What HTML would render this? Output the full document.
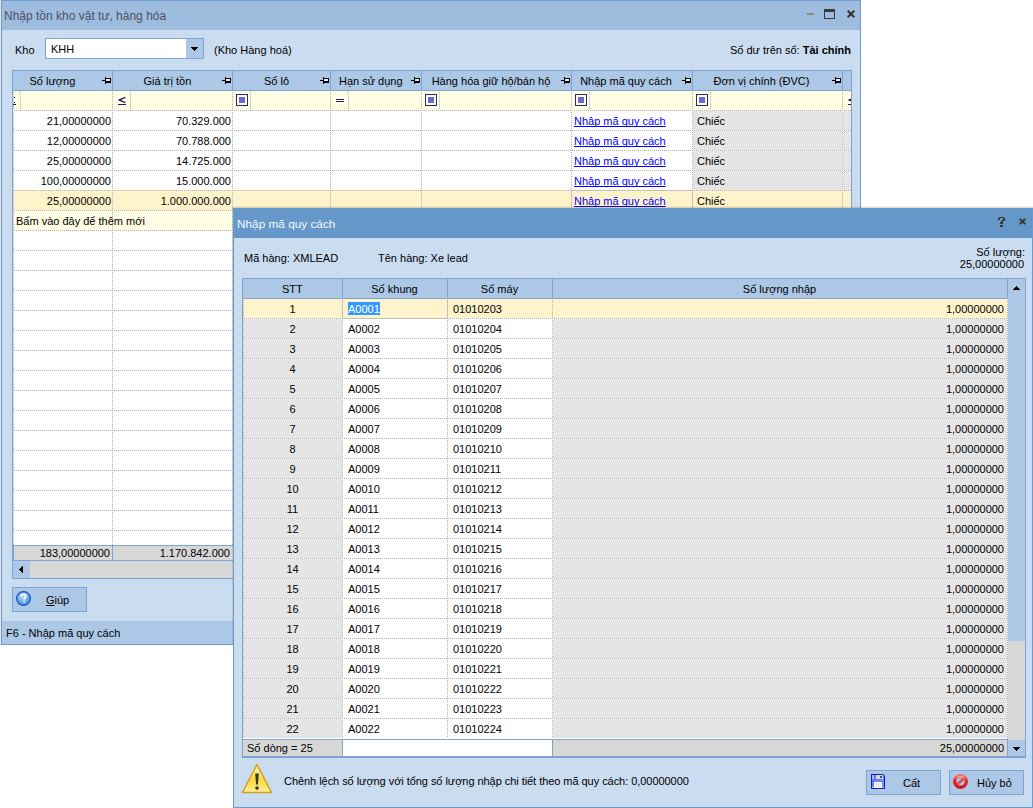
<!DOCTYPE html>
<html><head><meta charset="utf-8"><style>
html,body{margin:0;padding:0;background:#fff;width:1033px;height:808px;overflow:hidden;position:relative}
body div{position:absolute}
.t{font-family:"Liberation Sans",sans-serif;white-space:nowrap}
svg{position:absolute}
</style></head><body>
<div style="left:0px;top:0px;width:1px;height:645px;background:#e9e4df;"></div>
<div style="left:1px;top:0px;width:860px;height:645px;background:#6f9cd2;"></div>
<div style="left:2px;top:1px;width:858px;height:29px;background:#9ebcdd;"></div>
<div style="left:2px;top:30px;width:858px;height:591px;background:#cadcf0;"></div>
<div style="left:2px;top:621px;width:858px;height:23px;background:#adc7e6;"></div>
<div class="t" style="top:9px;font-size:12px;line-height:14px;color:#4f4f66;left:4px;">Nhập tồn kho vật tư, hàng hóa</div>
<div style="left:807px;top:13px;width:7px;height:2px;background:#8c8884;"></div>
<div style="left:824px;top:9px;width:11px;height:10px;background:transparent;box-sizing:border-box;border:1px solid #3c3c3c;border-top-width:3px"></div>
<svg style="position:absolute;left:846px;top:9px" width="10" height="10"><path d="M1.7 1.7L8.3 8.3M8.3 1.7L1.7 8.3" stroke="#333" stroke-width="2"/></svg>
<div class="t" style="top:43px;font-size:11px;line-height:14px;color:#000;left:15px;">Kho</div>
<div style="left:45px;top:38px;width:159px;height:21px;background:#7fa4d2;"></div>
<div style="left:46px;top:39px;width:140px;height:19px;background:#fff;"></div>
<div style="left:186px;top:39px;width:17px;height:19px;background:#adc7e6;"></div>
<div style="left:191px;top:47px;width:7px;height:1px;background:#000;"></div>
<div style="left:192px;top:48px;width:5px;height:1px;background:#000;"></div>
<div style="left:193px;top:49px;width:3px;height:1px;background:#000;"></div>
<div style="left:194px;top:50px;width:1px;height:1px;background:#000;"></div>
<div class="t" style="top:42px;font-size:11px;line-height:14px;color:#000;left:51px;">KHH</div>
<div class="t" style="top:43px;font-size:11px;line-height:14px;color:#000;left:214px;">(Kho Hàng hoá)</div>
<div class="t" style="top:43px;font-size:11px;line-height:14px;color:#000;left:251px;width:600px;text-align:right;">Số dư trên sổ: <b>Tài chính</b></div>
<div style="left:12px;top:70px;width:840px;height:509px;background:#7ea3d2;"></div>
<div style="left:13px;top:71px;width:838px;height:19px;background:#adc7e6;"></div>
<div style="left:13px;top:91px;width:838px;height:454px;background:#fff;"></div>
<div style="left:13px;top:91px;width:838px;height:19px;background:#fffde3;"></div>
<div style="left:112px;top:71px;width:1px;height:19px;background:#7ea3d2;"></div>
<div style="left:232px;top:71px;width:1px;height:19px;background:#7ea3d2;"></div>
<div style="left:330px;top:71px;width:1px;height:19px;background:#7ea3d2;"></div>
<div style="left:421px;top:71px;width:1px;height:19px;background:#7ea3d2;"></div>
<div style="left:571px;top:71px;width:1px;height:19px;background:#7ea3d2;"></div>
<div style="left:692px;top:71px;width:1px;height:19px;background:#7ea3d2;"></div>
<div style="left:842px;top:71px;width:1px;height:19px;background:#7ea3d2;"></div>
<div style="left:102px;top:80px;width:3px;height:1px;background:#000;"></div>
<div style="left:105px;top:77px;width:1px;height:7px;background:#000;"></div>
<div style="left:106px;top:78px;width:5px;height:1px;background:#000;"></div>
<div style="left:110px;top:78px;width:1px;height:5px;background:#000;"></div>
<div style="left:106px;top:81px;width:5px;height:2px;background:#000;"></div>
<div style="left:106px;top:79px;width:4px;height:2px;background:#e6edf6;"></div>
<div style="left:222px;top:80px;width:3px;height:1px;background:#000;"></div>
<div style="left:225px;top:77px;width:1px;height:7px;background:#000;"></div>
<div style="left:226px;top:78px;width:5px;height:1px;background:#000;"></div>
<div style="left:230px;top:78px;width:1px;height:5px;background:#000;"></div>
<div style="left:226px;top:81px;width:5px;height:2px;background:#000;"></div>
<div style="left:226px;top:79px;width:4px;height:2px;background:#e6edf6;"></div>
<div style="left:320px;top:80px;width:3px;height:1px;background:#000;"></div>
<div style="left:323px;top:77px;width:1px;height:7px;background:#000;"></div>
<div style="left:324px;top:78px;width:5px;height:1px;background:#000;"></div>
<div style="left:328px;top:78px;width:1px;height:5px;background:#000;"></div>
<div style="left:324px;top:81px;width:5px;height:2px;background:#000;"></div>
<div style="left:324px;top:79px;width:4px;height:2px;background:#e6edf6;"></div>
<div style="left:411px;top:80px;width:3px;height:1px;background:#000;"></div>
<div style="left:414px;top:77px;width:1px;height:7px;background:#000;"></div>
<div style="left:415px;top:78px;width:5px;height:1px;background:#000;"></div>
<div style="left:419px;top:78px;width:1px;height:5px;background:#000;"></div>
<div style="left:415px;top:81px;width:5px;height:2px;background:#000;"></div>
<div style="left:415px;top:79px;width:4px;height:2px;background:#e6edf6;"></div>
<div style="left:561px;top:80px;width:3px;height:1px;background:#000;"></div>
<div style="left:564px;top:77px;width:1px;height:7px;background:#000;"></div>
<div style="left:565px;top:78px;width:5px;height:1px;background:#000;"></div>
<div style="left:569px;top:78px;width:1px;height:5px;background:#000;"></div>
<div style="left:565px;top:81px;width:5px;height:2px;background:#000;"></div>
<div style="left:565px;top:79px;width:4px;height:2px;background:#e6edf6;"></div>
<div style="left:682px;top:80px;width:3px;height:1px;background:#000;"></div>
<div style="left:685px;top:77px;width:1px;height:7px;background:#000;"></div>
<div style="left:686px;top:78px;width:5px;height:1px;background:#000;"></div>
<div style="left:690px;top:78px;width:1px;height:5px;background:#000;"></div>
<div style="left:686px;top:81px;width:5px;height:2px;background:#000;"></div>
<div style="left:686px;top:79px;width:4px;height:2px;background:#e6edf6;"></div>
<div style="left:832px;top:80px;width:3px;height:1px;background:#000;"></div>
<div style="left:835px;top:77px;width:1px;height:7px;background:#000;"></div>
<div style="left:836px;top:78px;width:5px;height:1px;background:#000;"></div>
<div style="left:840px;top:78px;width:1px;height:5px;background:#000;"></div>
<div style="left:836px;top:81px;width:5px;height:2px;background:#000;"></div>
<div style="left:836px;top:79px;width:4px;height:2px;background:#e6edf6;"></div>
<div class="t" style="top:74px;font-size:11px;line-height:14px;color:#000;left:-247.6px;width:600px;text-align:center;">Số lượng</div>
<div class="t" style="top:74px;font-size:11px;line-height:14px;color:#000;left:-132.6px;width:600px;text-align:center;">Giá trị tồn</div>
<div class="t" style="top:74px;font-size:11px;line-height:14px;color:#000;left:-23.5px;width:600px;text-align:center;">Số lô</div>
<div class="t" style="top:74px;font-size:11px;line-height:14px;color:#000;left:70.80000000000001px;width:600px;text-align:center;">Hạn sử dụng</div>
<div class="t" style="top:74px;font-size:11px;line-height:14px;color:#000;left:191px;width:600px;text-align:center;">Hàng hóa giữ hộ/bán hộ</div>
<div class="t" style="top:74px;font-size:11px;line-height:14px;color:#000;left:326px;width:600px;text-align:center;">Nhập mã quy cách</div>
<div class="t" style="top:74px;font-size:11px;line-height:14px;color:#000;left:461.5px;width:600px;text-align:center;">Đơn vị chính (ĐVC)</div>
<div style="left:236px;top:94px;width:12px;height:12px;background:#fff;box-sizing:border-box;border:1px solid #2a2a6a"></div>
<div style="left:239px;top:97px;width:6px;height:6px;background:#6a6ad2;"></div>
<div style="left:425px;top:94px;width:12px;height:12px;background:#fff;box-sizing:border-box;border:1px solid #2a2a6a"></div>
<div style="left:428px;top:97px;width:6px;height:6px;background:#6a6ad2;"></div>
<div style="left:575px;top:94px;width:12px;height:12px;background:#fff;box-sizing:border-box;border:1px solid #2a2a6a"></div>
<div style="left:578px;top:97px;width:6px;height:6px;background:#6a6ad2;"></div>
<div style="left:696px;top:94px;width:12px;height:12px;background:#fff;box-sizing:border-box;border:1px solid #2a2a6a"></div>
<div style="left:699px;top:97px;width:6px;height:6px;background:#6a6ad2;"></div>
<svg style="position:absolute;left:118px;top:96px" width="9" height="10"><path d="M7.4 1.4L1.3 4L7.4 6.6" fill="none" stroke="#1c1c5c" stroke-width="1.3"/><rect x="0" y="8" width="8" height="1" fill="#1c1c5c"/></svg>
<div style="left:336px;top:99px;width:8px;height:1px;background:#1c1c5c;"></div>
<div style="left:336px;top:101px;width:8px;height:1px;background:#1c1c5c;"></div>
<div style="left:13px;top:91px;width:1px;height:19px;background:linear-gradient(to bottom,#b0b0b0 50%,#fffde3 50%);background-size:1px 2px;background-position:0 1px"></div>
<div style="left:112px;top:91px;width:1px;height:19px;background:linear-gradient(to bottom,#b0b0b0 50%,#fffde3 50%);background-size:1px 2px;background-position:0 1px"></div>
<div style="left:232px;top:91px;width:1px;height:19px;background:linear-gradient(to bottom,#b0b0b0 50%,#fffde3 50%);background-size:1px 2px;background-position:0 1px"></div>
<div style="left:330px;top:91px;width:1px;height:19px;background:linear-gradient(to bottom,#b0b0b0 50%,#fffde3 50%);background-size:1px 2px;background-position:0 1px"></div>
<div style="left:421px;top:91px;width:1px;height:19px;background:linear-gradient(to bottom,#b0b0b0 50%,#fffde3 50%);background-size:1px 2px;background-position:0 1px"></div>
<div style="left:571px;top:91px;width:1px;height:19px;background:linear-gradient(to bottom,#b0b0b0 50%,#fffde3 50%);background-size:1px 2px;background-position:0 1px"></div>
<div style="left:692px;top:91px;width:1px;height:19px;background:linear-gradient(to bottom,#b0b0b0 50%,#fffde3 50%);background-size:1px 2px;background-position:0 1px"></div>
<div style="left:842px;top:91px;width:1px;height:19px;background:linear-gradient(to bottom,#b0b0b0 50%,#fffde3 50%);background-size:1px 2px;background-position:0 1px"></div>
<div style="left:20px;top:91px;width:1px;height:19px;background:linear-gradient(to bottom,#b0b0b0 50%,#fffde3 50%);background-size:1px 2px;background-position:0 1px"></div>
<div style="left:130px;top:91px;width:1px;height:19px;background:linear-gradient(to bottom,#b0b0b0 50%,#fffde3 50%);background-size:1px 2px;background-position:0 1px"></div>
<div style="left:250px;top:91px;width:1px;height:19px;background:linear-gradient(to bottom,#b0b0b0 50%,#fffde3 50%);background-size:1px 2px;background-position:0 1px"></div>
<div style="left:348px;top:91px;width:1px;height:19px;background:linear-gradient(to bottom,#b0b0b0 50%,#fffde3 50%);background-size:1px 2px;background-position:0 1px"></div>
<div style="left:439px;top:91px;width:1px;height:19px;background:linear-gradient(to bottom,#b0b0b0 50%,#fffde3 50%);background-size:1px 2px;background-position:0 1px"></div>
<div style="left:589px;top:91px;width:1px;height:19px;background:linear-gradient(to bottom,#b0b0b0 50%,#fffde3 50%);background-size:1px 2px;background-position:0 1px"></div>
<div style="left:710px;top:91px;width:1px;height:19px;background:linear-gradient(to bottom,#b0b0b0 50%,#fffde3 50%);background-size:1px 2px;background-position:0 1px"></div>
<div style="left:14px;top:97px;width:1px;height:1px;background:#1c1c5c;"></div>
<div style="left:14px;top:102px;width:1px;height:1px;background:#1c1c5c;"></div>
<div style="left:13px;top:104px;width:3px;height:1px;background:#1c1c5c;"></div>
<div style="left:843px;top:91px;width:8px;height:19px;overflow:hidden"><svg style="position:absolute;left:5px;top:5px" width="9" height="10"><path d="M7.4 1.4L1.3 4L7.4 6.6" fill="none" stroke="#1c1c5c" stroke-width="1.3"/><rect x="0" y="8" width="8" height="1" fill="#1c1c5c"/></svg></div>
<div style="left:693px;top:111px;width:158px;height:19px;background:#e5e5e5;"></div>
<div style="left:693px;top:131px;width:158px;height:19px;background:#e5e5e5;"></div>
<div style="left:693px;top:151px;width:158px;height:19px;background:#e5e5e5;"></div>
<div style="left:693px;top:171px;width:158px;height:19px;background:#e5e5e5;"></div>
<div style="left:13px;top:191px;width:838px;height:19px;background:#fff3cc;"></div>
<div style="left:13px;top:211px;width:838px;height:19px;background:#fffde3;"></div>
<div style="left:13px;top:110px;width:838px;height:1px;background:linear-gradient(to right,#b0b0b0 50%,#fff 50%);background-size:2px 1px;background-position:1px 0"></div>
<div style="left:13px;top:130px;width:838px;height:1px;background:linear-gradient(to right,#b0b0b0 50%,#fff 50%);background-size:2px 1px;background-position:1px 0"></div>
<div style="left:13px;top:150px;width:838px;height:1px;background:linear-gradient(to right,#b0b0b0 50%,#fff 50%);background-size:2px 1px;background-position:1px 0"></div>
<div style="left:13px;top:170px;width:838px;height:1px;background:linear-gradient(to right,#b0b0b0 50%,#fff 50%);background-size:2px 1px;background-position:1px 0"></div>
<div style="left:13px;top:190px;width:838px;height:1px;background:linear-gradient(to right,#b0b0b0 50%,#fff3cc 50%);background-size:2px 1px;background-position:1px 0"></div>
<div style="left:13px;top:210px;width:838px;height:1px;background:linear-gradient(to right,#b0b0b0 50%,#fffde3 50%);background-size:2px 1px;background-position:1px 0"></div>
<div style="left:13px;top:230px;width:838px;height:1px;background:linear-gradient(to right,#b0b0b0 50%,#fffde3 50%);background-size:2px 1px;background-position:1px 0"></div>
<div style="left:13px;top:250px;width:838px;height:1px;background:linear-gradient(to right,#b0b0b0 50%,#fff 50%);background-size:2px 1px;background-position:1px 0"></div>
<div style="left:13px;top:270px;width:838px;height:1px;background:linear-gradient(to right,#b0b0b0 50%,#fff 50%);background-size:2px 1px;background-position:1px 0"></div>
<div style="left:13px;top:290px;width:838px;height:1px;background:linear-gradient(to right,#b0b0b0 50%,#fff 50%);background-size:2px 1px;background-position:1px 0"></div>
<div style="left:13px;top:310px;width:838px;height:1px;background:linear-gradient(to right,#b0b0b0 50%,#fff 50%);background-size:2px 1px;background-position:1px 0"></div>
<div style="left:13px;top:330px;width:838px;height:1px;background:linear-gradient(to right,#b0b0b0 50%,#fff 50%);background-size:2px 1px;background-position:1px 0"></div>
<div style="left:13px;top:350px;width:838px;height:1px;background:linear-gradient(to right,#b0b0b0 50%,#fff 50%);background-size:2px 1px;background-position:1px 0"></div>
<div style="left:13px;top:370px;width:838px;height:1px;background:linear-gradient(to right,#b0b0b0 50%,#fff 50%);background-size:2px 1px;background-position:1px 0"></div>
<div style="left:13px;top:390px;width:838px;height:1px;background:linear-gradient(to right,#b0b0b0 50%,#fff 50%);background-size:2px 1px;background-position:1px 0"></div>
<div style="left:13px;top:410px;width:838px;height:1px;background:linear-gradient(to right,#b0b0b0 50%,#fff 50%);background-size:2px 1px;background-position:1px 0"></div>
<div style="left:13px;top:430px;width:838px;height:1px;background:linear-gradient(to right,#b0b0b0 50%,#fff 50%);background-size:2px 1px;background-position:1px 0"></div>
<div style="left:13px;top:450px;width:838px;height:1px;background:linear-gradient(to right,#b0b0b0 50%,#fff 50%);background-size:2px 1px;background-position:1px 0"></div>
<div style="left:13px;top:470px;width:838px;height:1px;background:linear-gradient(to right,#b0b0b0 50%,#fff 50%);background-size:2px 1px;background-position:1px 0"></div>
<div style="left:13px;top:490px;width:838px;height:1px;background:linear-gradient(to right,#b0b0b0 50%,#fff 50%);background-size:2px 1px;background-position:1px 0"></div>
<div style="left:13px;top:510px;width:838px;height:1px;background:linear-gradient(to right,#b0b0b0 50%,#fff 50%);background-size:2px 1px;background-position:1px 0"></div>
<div style="left:13px;top:530px;width:838px;height:1px;background:linear-gradient(to right,#b0b0b0 50%,#fff 50%);background-size:2px 1px;background-position:1px 0"></div>
<div style="left:112px;top:111px;width:1px;height:434px;background:linear-gradient(to bottom,#b0b0b0 50%,#fff 50%);background-size:1px 2px;background-position:0 1px"></div>
<div style="left:232px;top:111px;width:1px;height:434px;background:linear-gradient(to bottom,#b0b0b0 50%,#fff 50%);background-size:1px 2px;background-position:0 1px"></div>
<div style="left:330px;top:111px;width:1px;height:99px;background:linear-gradient(to bottom,#b0b0b0 50%,#fff 50%);background-size:1px 2px;background-position:0 1px"></div>
<div style="left:421px;top:111px;width:1px;height:99px;background:linear-gradient(to bottom,#b0b0b0 50%,#fff 50%);background-size:1px 2px;background-position:0 1px"></div>
<div style="left:571px;top:111px;width:1px;height:99px;background:linear-gradient(to bottom,#b0b0b0 50%,#fff 50%);background-size:1px 2px;background-position:0 1px"></div>
<div style="left:692px;top:111px;width:1px;height:99px;background:linear-gradient(to bottom,#b0b0b0 50%,#fff 50%);background-size:1px 2px;background-position:0 1px"></div>
<div style="left:842px;top:111px;width:1px;height:99px;background:linear-gradient(to bottom,#b0b0b0 50%,#fff 50%);background-size:1px 2px;background-position:0 1px"></div>
<div style="left:13px;top:111px;width:1px;height:434px;background:linear-gradient(to bottom,#b0b0b0 50%,#fff 50%);background-size:1px 2px;background-position:0 1px"></div>
<div style="left:13px;top:191px;width:1px;height:19px;background:linear-gradient(to bottom,#b0b0b0 50%,#fff3cc 50%);background-size:1px 2px;background-position:0 1px"></div>
<div style="left:112px;top:191px;width:1px;height:19px;background:linear-gradient(to bottom,#b0b0b0 50%,#fff3cc 50%);background-size:1px 2px;background-position:0 1px"></div>
<div style="left:232px;top:191px;width:1px;height:19px;background:linear-gradient(to bottom,#b0b0b0 50%,#fff3cc 50%);background-size:1px 2px;background-position:0 1px"></div>
<div style="left:330px;top:191px;width:1px;height:19px;background:linear-gradient(to bottom,#b0b0b0 50%,#fff3cc 50%);background-size:1px 2px;background-position:0 1px"></div>
<div style="left:421px;top:191px;width:1px;height:19px;background:linear-gradient(to bottom,#b0b0b0 50%,#fff3cc 50%);background-size:1px 2px;background-position:0 1px"></div>
<div style="left:571px;top:191px;width:1px;height:19px;background:linear-gradient(to bottom,#b0b0b0 50%,#fff3cc 50%);background-size:1px 2px;background-position:0 1px"></div>
<div style="left:692px;top:191px;width:1px;height:19px;background:linear-gradient(to bottom,#b0b0b0 50%,#fff3cc 50%);background-size:1px 2px;background-position:0 1px"></div>
<div style="left:842px;top:191px;width:1px;height:19px;background:linear-gradient(to bottom,#b0b0b0 50%,#fff3cc 50%);background-size:1px 2px;background-position:0 1px"></div>
<div style="left:13px;top:211px;width:1px;height:19px;background:linear-gradient(to bottom,#b0b0b0 50%,#fffde3 50%);background-size:1px 2px;background-position:0 1px"></div>
<div style="left:112px;top:211px;width:1px;height:19px;background:linear-gradient(to bottom,#b0b0b0 50%,#fffde3 50%);background-size:1px 2px;background-position:0 1px"></div>
<div style="left:232px;top:211px;width:1px;height:19px;background:linear-gradient(to bottom,#b0b0b0 50%,#fffde3 50%);background-size:1px 2px;background-position:0 1px"></div>
<div style="left:571px;top:190px;width:122px;height:21px;background:transparent;box-sizing:border-box;border:1px solid #c0c0c0;border-bottom:none"></div>
<div class="t" style="top:114px;font-size:11px;line-height:14px;color:#000;left:-489px;width:600px;text-align:right;">21,00000000</div>
<div class="t" style="top:114px;font-size:11px;line-height:14px;color:#000;left:-369px;width:600px;text-align:right;">70.329.000</div>
<div class="t" style="top:114px;font-size:11px;line-height:14px;color:#0000ff;left:574px;text-decoration:underline;text-decoration-skip-ink:none">Nhập mã quy cách</div>
<div class="t" style="top:114px;font-size:11px;line-height:14px;color:#000;left:697px;">Chiếc</div>
<div class="t" style="top:134px;font-size:11px;line-height:14px;color:#000;left:-489px;width:600px;text-align:right;">12,00000000</div>
<div class="t" style="top:134px;font-size:11px;line-height:14px;color:#000;left:-369px;width:600px;text-align:right;">70.788.000</div>
<div class="t" style="top:134px;font-size:11px;line-height:14px;color:#0000ff;left:574px;text-decoration:underline;text-decoration-skip-ink:none">Nhập mã quy cách</div>
<div class="t" style="top:134px;font-size:11px;line-height:14px;color:#000;left:697px;">Chiếc</div>
<div class="t" style="top:154px;font-size:11px;line-height:14px;color:#000;left:-489px;width:600px;text-align:right;">25,00000000</div>
<div class="t" style="top:154px;font-size:11px;line-height:14px;color:#000;left:-369px;width:600px;text-align:right;">14.725.000</div>
<div class="t" style="top:154px;font-size:11px;line-height:14px;color:#0000ff;left:574px;text-decoration:underline;text-decoration-skip-ink:none">Nhập mã quy cách</div>
<div class="t" style="top:154px;font-size:11px;line-height:14px;color:#000;left:697px;">Chiếc</div>
<div class="t" style="top:174px;font-size:11px;line-height:14px;color:#000;left:-489px;width:600px;text-align:right;">100,00000000</div>
<div class="t" style="top:174px;font-size:11px;line-height:14px;color:#000;left:-369px;width:600px;text-align:right;">15.000.000</div>
<div class="t" style="top:174px;font-size:11px;line-height:14px;color:#0000ff;left:574px;text-decoration:underline;text-decoration-skip-ink:none">Nhập mã quy cách</div>
<div class="t" style="top:174px;font-size:11px;line-height:14px;color:#000;left:697px;">Chiếc</div>
<div class="t" style="top:194px;font-size:11px;line-height:14px;color:#000;left:-489px;width:600px;text-align:right;">25,00000000</div>
<div class="t" style="top:194px;font-size:11px;line-height:14px;color:#000;left:-369px;width:600px;text-align:right;">1.000.000.000</div>
<div class="t" style="top:194px;font-size:11px;line-height:14px;color:#0000ff;left:574px;text-decoration:underline;text-decoration-skip-ink:none">Nhập mã quy cách</div>
<div class="t" style="top:194px;font-size:11px;line-height:14px;color:#000;left:697px;">Chiếc</div>
<div class="t" style="top:214px;font-size:11px;line-height:14px;color:#000;left:16px;">Bấm vào đây để thêm mới</div>
<div style="left:13px;top:546px;width:838px;height:14px;background:#d7d7d7;"></div>
<div style="left:112px;top:546px;width:1px;height:14px;background:#7ea3d2;"></div>
<div class="t" style="top:546px;font-size:11px;line-height:14px;color:#000;left:-490px;width:600px;text-align:right;">183,00000000</div>
<div class="t" style="top:546px;font-size:11px;line-height:14px;color:#000;left:-370px;width:600px;text-align:right;">1.170.842.000</div>
<div style="left:13px;top:561px;width:838px;height:17px;background:#d7d7d7;"></div>
<div style="left:13px;top:561px;width:17px;height:17px;background:#adc7e6;"></div>
<div style="left:19px;top:569px;width:1px;height:1px;background:#000;"></div>
<div style="left:20px;top:568px;width:1px;height:3px;background:#000;"></div>
<div style="left:21px;top:567px;width:1px;height:5px;background:#000;"></div>
<div style="left:22px;top:566px;width:1px;height:7px;background:#000;"></div>
<div style="left:13px;top:546px;width:1px;height:14px;background:#7ea3d2;"></div>
<div style="left:12px;top:587px;width:75px;height:25px;background:#7fa4d2;"></div>
<div style="left:13px;top:588px;width:73px;height:23px;background:#adc7e6;"></div>
<svg style="position:absolute;left:16px;top:591px" width="15" height="15"><defs><radialGradient id="hg" cx="0.45" cy="0.35" r="0.65"><stop offset="0" stop-color="#b8dcff"/><stop offset="1" stop-color="#3f8ae0"/></radialGradient></defs><circle cx="7.5" cy="7.5" r="6.9" fill="url(#hg)" stroke="#1655b0" stroke-width="1.2"/><path d="M5.2 5.6C5.2 4.1 6.2 3.4 7.6 3.4C9 3.4 9.9 4.2 9.9 5.3C9.9 6.6 8.2 6.9 8.2 8.6" fill="none" stroke="#fff" stroke-width="1.7"/><circle cx="8.2" cy="10.6" r="1.05" fill="#fff"/></svg>
<div class="t" style="top:593px;font-size:11px;line-height:14px;color:#000;left:46px;"><u style="text-decoration-skip-ink:none">G</u>iúp</div>
<div class="t" style="top:626px;font-size:11px;line-height:14px;color:#000;left:6px;">F6 - Nhập mã quy cách</div>
<div style="left:232px;top:206px;width:801px;height:1px;background:rgba(90,70,30,0.06);"></div>
<div style="left:232px;top:207px;width:801px;height:1px;background:rgba(90,70,30,0.2);"></div>
<div style="left:232px;top:208px;width:1px;height:437px;background:rgba(60,60,60,0.12);"></div>
<div style="left:233px;top:208px;width:800px;height:600px;background:#6a9ad0;"></div>
<div style="left:234px;top:208px;width:798px;height:30px;background:#6597c9;"></div>
<div style="left:234px;top:238px;width:798px;height:569px;background:#cadcf0;"></div>
<div class="t" style="top:217px;font-size:11.8px;line-height:14px;color:#f4f8ff;left:237px;">Nhập mã quy cách</div>
<div style="left:999px;top:217px;width:5px;height:1px;background:#3a3a3a;"></div>
<div style="left:998px;top:218px;width:2px;height:2px;background:#3a3a3a;"></div>
<div style="left:1003px;top:218px;width:2px;height:3px;background:#3a3a3a;"></div>
<div style="left:1002px;top:220px;width:1px;height:1px;background:#3a3a3a;"></div>
<div style="left:1001px;top:221px;width:2px;height:1px;background:#3a3a3a;"></div>
<div style="left:1000px;top:222px;width:3px;height:2px;background:#3a3a3a;"></div>
<div style="left:1000px;top:225px;width:3px;height:2px;background:#3a3a3a;"></div>
<svg style="position:absolute;left:1019px;top:218px" width="7" height="7"><path d="M0.8 0.8L6.2 6.2M6.2 0.8L0.8 6.2" stroke="#333" stroke-width="1.9"/></svg>
<div class="t" style="top:251px;font-size:11px;line-height:14px;color:#000;left:244px;">Mã hàng: XMLEAD</div>
<div class="t" style="top:251px;font-size:11px;line-height:14px;color:#000;left:378px;">Tên hàng: Xe lead</div>
<div class="t" style="top:245px;font-size:11px;line-height:14px;color:#000;left:425px;width:600px;text-align:right;">Số lượng:</div>
<div class="t" style="top:257px;font-size:11px;line-height:14px;color:#000;left:424px;width:600px;text-align:right;">25,00000000</div>
<div style="left:242px;top:278px;width:784px;height:480px;background:#7ea3d2;"></div>
<div style="left:243px;top:279px;width:764px;height:19px;background:#adc7e6;"></div>
<div style="left:1008px;top:279px;width:17px;height:362px;background:#adc7e6;"></div>
<div style="left:1008px;top:641px;width:17px;height:99px;background:#d7d7d7;"></div>
<div style="left:1008px;top:740px;width:17px;height:16px;background:#adc7e6;"></div>
<div style="left:1016px;top:286px;width:1px;height:1px;background:#000;"></div>
<div style="left:1015px;top:287px;width:3px;height:1px;background:#000;"></div>
<div style="left:1014px;top:288px;width:5px;height:1px;background:#000;"></div>
<div style="left:1013px;top:289px;width:7px;height:1px;background:#000;"></div>
<div style="left:1013px;top:747px;width:7px;height:1px;background:#000;"></div>
<div style="left:1014px;top:748px;width:5px;height:1px;background:#000;"></div>
<div style="left:1015px;top:749px;width:3px;height:1px;background:#000;"></div>
<div style="left:1016px;top:750px;width:1px;height:1px;background:#000;"></div>
<div style="left:342px;top:279px;width:1px;height:19px;background:#7ea3d2;"></div>
<div style="left:447px;top:279px;width:1px;height:19px;background:#7ea3d2;"></div>
<div style="left:552px;top:279px;width:1px;height:19px;background:#7ea3d2;"></div>
<div style="left:1007px;top:279px;width:1px;height:19px;background:#7ea3d2;"></div>
<div style="left:1007px;top:299px;width:1px;height:439px;background:linear-gradient(to bottom,#b0b0b0 50%,#fff 50%);background-size:1px 2px;background-position:0 1px"></div>
<div style="left:1007px;top:739px;width:1px;height:17px;background:#7ea3d2;"></div>
<div class="t" style="top:282px;font-size:11px;line-height:14px;color:#000;left:-7.699999999999989px;width:600px;text-align:center;">STT</div>
<div class="t" style="top:282px;font-size:11px;line-height:14px;color:#000;left:94.5px;width:600px;text-align:center;">Số khung</div>
<div class="t" style="top:282px;font-size:11px;line-height:14px;color:#000;left:199.5px;width:600px;text-align:center;">Số máy</div>
<div class="t" style="top:282px;font-size:11px;line-height:14px;color:#000;left:479.5px;width:600px;text-align:center;">Số lượng nhập</div>
<div style="left:243px;top:299px;width:764px;height:440px;background:#fff;"></div>
<div style="left:243px;top:299px;width:764px;height:19px;background:#fff3cc;"></div>
<div style="left:243px;top:319px;width:99px;height:19px;background:#e5e5e5;"></div>
<div style="left:553px;top:319px;width:454px;height:19px;background:#e5e5e5;"></div>
<div style="left:243px;top:339px;width:99px;height:19px;background:#e5e5e5;"></div>
<div style="left:553px;top:339px;width:454px;height:19px;background:#e5e5e5;"></div>
<div style="left:243px;top:359px;width:99px;height:19px;background:#e5e5e5;"></div>
<div style="left:553px;top:359px;width:454px;height:19px;background:#e5e5e5;"></div>
<div style="left:243px;top:379px;width:99px;height:19px;background:#e5e5e5;"></div>
<div style="left:553px;top:379px;width:454px;height:19px;background:#e5e5e5;"></div>
<div style="left:243px;top:399px;width:99px;height:19px;background:#e5e5e5;"></div>
<div style="left:553px;top:399px;width:454px;height:19px;background:#e5e5e5;"></div>
<div style="left:243px;top:419px;width:99px;height:19px;background:#e5e5e5;"></div>
<div style="left:553px;top:419px;width:454px;height:19px;background:#e5e5e5;"></div>
<div style="left:243px;top:439px;width:99px;height:19px;background:#e5e5e5;"></div>
<div style="left:553px;top:439px;width:454px;height:19px;background:#e5e5e5;"></div>
<div style="left:243px;top:459px;width:99px;height:19px;background:#e5e5e5;"></div>
<div style="left:553px;top:459px;width:454px;height:19px;background:#e5e5e5;"></div>
<div style="left:243px;top:479px;width:99px;height:19px;background:#e5e5e5;"></div>
<div style="left:553px;top:479px;width:454px;height:19px;background:#e5e5e5;"></div>
<div style="left:243px;top:499px;width:99px;height:19px;background:#e5e5e5;"></div>
<div style="left:553px;top:499px;width:454px;height:19px;background:#e5e5e5;"></div>
<div style="left:243px;top:519px;width:99px;height:19px;background:#e5e5e5;"></div>
<div style="left:553px;top:519px;width:454px;height:19px;background:#e5e5e5;"></div>
<div style="left:243px;top:539px;width:99px;height:19px;background:#e5e5e5;"></div>
<div style="left:553px;top:539px;width:454px;height:19px;background:#e5e5e5;"></div>
<div style="left:243px;top:559px;width:99px;height:19px;background:#e5e5e5;"></div>
<div style="left:553px;top:559px;width:454px;height:19px;background:#e5e5e5;"></div>
<div style="left:243px;top:579px;width:99px;height:19px;background:#e5e5e5;"></div>
<div style="left:553px;top:579px;width:454px;height:19px;background:#e5e5e5;"></div>
<div style="left:243px;top:599px;width:99px;height:19px;background:#e5e5e5;"></div>
<div style="left:553px;top:599px;width:454px;height:19px;background:#e5e5e5;"></div>
<div style="left:243px;top:619px;width:99px;height:19px;background:#e5e5e5;"></div>
<div style="left:553px;top:619px;width:454px;height:19px;background:#e5e5e5;"></div>
<div style="left:243px;top:639px;width:99px;height:19px;background:#e5e5e5;"></div>
<div style="left:553px;top:639px;width:454px;height:19px;background:#e5e5e5;"></div>
<div style="left:243px;top:659px;width:99px;height:19px;background:#e5e5e5;"></div>
<div style="left:553px;top:659px;width:454px;height:19px;background:#e5e5e5;"></div>
<div style="left:243px;top:679px;width:99px;height:19px;background:#e5e5e5;"></div>
<div style="left:553px;top:679px;width:454px;height:19px;background:#e5e5e5;"></div>
<div style="left:243px;top:699px;width:99px;height:19px;background:#e5e5e5;"></div>
<div style="left:553px;top:699px;width:454px;height:19px;background:#e5e5e5;"></div>
<div style="left:243px;top:719px;width:99px;height:19px;background:#e5e5e5;"></div>
<div style="left:553px;top:719px;width:454px;height:19px;background:#e5e5e5;"></div>
<div style="left:243px;top:318px;width:764px;height:1px;background:linear-gradient(to right,#b0b0b0 50%,#fff 50%);background-size:2px 1px;background-position:1px 0"></div>
<div style="left:243px;top:338px;width:764px;height:1px;background:linear-gradient(to right,#b0b0b0 50%,#fff 50%);background-size:2px 1px;background-position:1px 0"></div>
<div style="left:243px;top:358px;width:764px;height:1px;background:linear-gradient(to right,#b0b0b0 50%,#fff 50%);background-size:2px 1px;background-position:1px 0"></div>
<div style="left:243px;top:378px;width:764px;height:1px;background:linear-gradient(to right,#b0b0b0 50%,#fff 50%);background-size:2px 1px;background-position:1px 0"></div>
<div style="left:243px;top:398px;width:764px;height:1px;background:linear-gradient(to right,#b0b0b0 50%,#fff 50%);background-size:2px 1px;background-position:1px 0"></div>
<div style="left:243px;top:418px;width:764px;height:1px;background:linear-gradient(to right,#b0b0b0 50%,#fff 50%);background-size:2px 1px;background-position:1px 0"></div>
<div style="left:243px;top:438px;width:764px;height:1px;background:linear-gradient(to right,#b0b0b0 50%,#fff 50%);background-size:2px 1px;background-position:1px 0"></div>
<div style="left:243px;top:458px;width:764px;height:1px;background:linear-gradient(to right,#b0b0b0 50%,#fff 50%);background-size:2px 1px;background-position:1px 0"></div>
<div style="left:243px;top:478px;width:764px;height:1px;background:linear-gradient(to right,#b0b0b0 50%,#fff 50%);background-size:2px 1px;background-position:1px 0"></div>
<div style="left:243px;top:498px;width:764px;height:1px;background:linear-gradient(to right,#b0b0b0 50%,#fff 50%);background-size:2px 1px;background-position:1px 0"></div>
<div style="left:243px;top:518px;width:764px;height:1px;background:linear-gradient(to right,#b0b0b0 50%,#fff 50%);background-size:2px 1px;background-position:1px 0"></div>
<div style="left:243px;top:538px;width:764px;height:1px;background:linear-gradient(to right,#b0b0b0 50%,#fff 50%);background-size:2px 1px;background-position:1px 0"></div>
<div style="left:243px;top:558px;width:764px;height:1px;background:linear-gradient(to right,#b0b0b0 50%,#fff 50%);background-size:2px 1px;background-position:1px 0"></div>
<div style="left:243px;top:578px;width:764px;height:1px;background:linear-gradient(to right,#b0b0b0 50%,#fff 50%);background-size:2px 1px;background-position:1px 0"></div>
<div style="left:243px;top:598px;width:764px;height:1px;background:linear-gradient(to right,#b0b0b0 50%,#fff 50%);background-size:2px 1px;background-position:1px 0"></div>
<div style="left:243px;top:618px;width:764px;height:1px;background:linear-gradient(to right,#b0b0b0 50%,#fff 50%);background-size:2px 1px;background-position:1px 0"></div>
<div style="left:243px;top:638px;width:764px;height:1px;background:linear-gradient(to right,#b0b0b0 50%,#fff 50%);background-size:2px 1px;background-position:1px 0"></div>
<div style="left:243px;top:658px;width:764px;height:1px;background:linear-gradient(to right,#b0b0b0 50%,#fff 50%);background-size:2px 1px;background-position:1px 0"></div>
<div style="left:243px;top:678px;width:764px;height:1px;background:linear-gradient(to right,#b0b0b0 50%,#fff 50%);background-size:2px 1px;background-position:1px 0"></div>
<div style="left:243px;top:698px;width:764px;height:1px;background:linear-gradient(to right,#b0b0b0 50%,#fff 50%);background-size:2px 1px;background-position:1px 0"></div>
<div style="left:243px;top:718px;width:764px;height:1px;background:linear-gradient(to right,#b0b0b0 50%,#fff 50%);background-size:2px 1px;background-position:1px 0"></div>
<div style="left:243px;top:738px;width:764px;height:1px;background:#fff;"></div>
<div style="left:342px;top:319px;width:1px;height:419px;background:linear-gradient(to bottom,#b0b0b0 50%,#fff 50%);background-size:1px 2px;background-position:0 1px"></div>
<div style="left:447px;top:319px;width:1px;height:419px;background:linear-gradient(to bottom,#b0b0b0 50%,#fff 50%);background-size:1px 2px;background-position:0 1px"></div>
<div style="left:552px;top:319px;width:1px;height:419px;background:linear-gradient(to bottom,#b0b0b0 50%,#fff 50%);background-size:1px 2px;background-position:0 1px"></div>
<div style="left:243px;top:299px;width:1px;height:439px;background:linear-gradient(to bottom,#b0b0b0 50%,#fff 50%);background-size:1px 2px;background-position:0 1px"></div>
<div style="left:342px;top:298px;width:106px;height:21px;background:transparent;box-sizing:border-box;border:1px solid #c0c0c0;border-top:none"></div>
<div style="left:552px;top:299px;width:1px;height:19px;background:linear-gradient(to bottom,#b0b0b0 50%,#fff3cc 50%);background-size:1px 2px;background-position:0 1px"></div>
<div style="left:243px;top:299px;width:1px;height:19px;background:linear-gradient(to bottom,#b0b0b0 50%,#fff3cc 50%);background-size:1px 2px;background-position:0 1px"></div>
<div class="t" style="top:302px;font-size:11px;line-height:14px;color:#000;left:-7.5px;width:600px;text-align:center;">1</div>
<div class="t" style="top:302px;font-size:11px;line-height:14px;color:#000;left:348px;"><span style="background:#3399ff;color:#fff;padding:1px 0 0">A0001</span></div>
<div class="t" style="top:302px;font-size:11px;line-height:14px;color:#000;left:453px;">01010203</div>
<div class="t" style="top:302px;font-size:11px;line-height:14px;color:#000;left:404px;width:600px;text-align:right;">1,00000000</div>
<div class="t" style="top:322px;font-size:11px;line-height:14px;color:#000;left:-7.5px;width:600px;text-align:center;">2</div>
<div class="t" style="top:322px;font-size:11px;line-height:14px;color:#000;left:348px;">A0002</div>
<div class="t" style="top:322px;font-size:11px;line-height:14px;color:#000;left:453px;">01010204</div>
<div class="t" style="top:322px;font-size:11px;line-height:14px;color:#000;left:404px;width:600px;text-align:right;">1,00000000</div>
<div class="t" style="top:342px;font-size:11px;line-height:14px;color:#000;left:-7.5px;width:600px;text-align:center;">3</div>
<div class="t" style="top:342px;font-size:11px;line-height:14px;color:#000;left:348px;">A0003</div>
<div class="t" style="top:342px;font-size:11px;line-height:14px;color:#000;left:453px;">01010205</div>
<div class="t" style="top:342px;font-size:11px;line-height:14px;color:#000;left:404px;width:600px;text-align:right;">1,00000000</div>
<div class="t" style="top:362px;font-size:11px;line-height:14px;color:#000;left:-7.5px;width:600px;text-align:center;">4</div>
<div class="t" style="top:362px;font-size:11px;line-height:14px;color:#000;left:348px;">A0004</div>
<div class="t" style="top:362px;font-size:11px;line-height:14px;color:#000;left:453px;">01010206</div>
<div class="t" style="top:362px;font-size:11px;line-height:14px;color:#000;left:404px;width:600px;text-align:right;">1,00000000</div>
<div class="t" style="top:382px;font-size:11px;line-height:14px;color:#000;left:-7.5px;width:600px;text-align:center;">5</div>
<div class="t" style="top:382px;font-size:11px;line-height:14px;color:#000;left:348px;">A0005</div>
<div class="t" style="top:382px;font-size:11px;line-height:14px;color:#000;left:453px;">01010207</div>
<div class="t" style="top:382px;font-size:11px;line-height:14px;color:#000;left:404px;width:600px;text-align:right;">1,00000000</div>
<div class="t" style="top:402px;font-size:11px;line-height:14px;color:#000;left:-7.5px;width:600px;text-align:center;">6</div>
<div class="t" style="top:402px;font-size:11px;line-height:14px;color:#000;left:348px;">A0006</div>
<div class="t" style="top:402px;font-size:11px;line-height:14px;color:#000;left:453px;">01010208</div>
<div class="t" style="top:402px;font-size:11px;line-height:14px;color:#000;left:404px;width:600px;text-align:right;">1,00000000</div>
<div class="t" style="top:422px;font-size:11px;line-height:14px;color:#000;left:-7.5px;width:600px;text-align:center;">7</div>
<div class="t" style="top:422px;font-size:11px;line-height:14px;color:#000;left:348px;">A0007</div>
<div class="t" style="top:422px;font-size:11px;line-height:14px;color:#000;left:453px;">01010209</div>
<div class="t" style="top:422px;font-size:11px;line-height:14px;color:#000;left:404px;width:600px;text-align:right;">1,00000000</div>
<div class="t" style="top:442px;font-size:11px;line-height:14px;color:#000;left:-7.5px;width:600px;text-align:center;">8</div>
<div class="t" style="top:442px;font-size:11px;line-height:14px;color:#000;left:348px;">A0008</div>
<div class="t" style="top:442px;font-size:11px;line-height:14px;color:#000;left:453px;">01010210</div>
<div class="t" style="top:442px;font-size:11px;line-height:14px;color:#000;left:404px;width:600px;text-align:right;">1,00000000</div>
<div class="t" style="top:462px;font-size:11px;line-height:14px;color:#000;left:-7.5px;width:600px;text-align:center;">9</div>
<div class="t" style="top:462px;font-size:11px;line-height:14px;color:#000;left:348px;">A0009</div>
<div class="t" style="top:462px;font-size:11px;line-height:14px;color:#000;left:453px;">01010211</div>
<div class="t" style="top:462px;font-size:11px;line-height:14px;color:#000;left:404px;width:600px;text-align:right;">1,00000000</div>
<div class="t" style="top:482px;font-size:11px;line-height:14px;color:#000;left:-7.5px;width:600px;text-align:center;">10</div>
<div class="t" style="top:482px;font-size:11px;line-height:14px;color:#000;left:348px;">A0010</div>
<div class="t" style="top:482px;font-size:11px;line-height:14px;color:#000;left:453px;">01010212</div>
<div class="t" style="top:482px;font-size:11px;line-height:14px;color:#000;left:404px;width:600px;text-align:right;">1,00000000</div>
<div class="t" style="top:502px;font-size:11px;line-height:14px;color:#000;left:-7.5px;width:600px;text-align:center;">11</div>
<div class="t" style="top:502px;font-size:11px;line-height:14px;color:#000;left:348px;">A0011</div>
<div class="t" style="top:502px;font-size:11px;line-height:14px;color:#000;left:453px;">01010213</div>
<div class="t" style="top:502px;font-size:11px;line-height:14px;color:#000;left:404px;width:600px;text-align:right;">1,00000000</div>
<div class="t" style="top:522px;font-size:11px;line-height:14px;color:#000;left:-7.5px;width:600px;text-align:center;">12</div>
<div class="t" style="top:522px;font-size:11px;line-height:14px;color:#000;left:348px;">A0012</div>
<div class="t" style="top:522px;font-size:11px;line-height:14px;color:#000;left:453px;">01010214</div>
<div class="t" style="top:522px;font-size:11px;line-height:14px;color:#000;left:404px;width:600px;text-align:right;">1,00000000</div>
<div class="t" style="top:542px;font-size:11px;line-height:14px;color:#000;left:-7.5px;width:600px;text-align:center;">13</div>
<div class="t" style="top:542px;font-size:11px;line-height:14px;color:#000;left:348px;">A0013</div>
<div class="t" style="top:542px;font-size:11px;line-height:14px;color:#000;left:453px;">01010215</div>
<div class="t" style="top:542px;font-size:11px;line-height:14px;color:#000;left:404px;width:600px;text-align:right;">1,00000000</div>
<div class="t" style="top:562px;font-size:11px;line-height:14px;color:#000;left:-7.5px;width:600px;text-align:center;">14</div>
<div class="t" style="top:562px;font-size:11px;line-height:14px;color:#000;left:348px;">A0014</div>
<div class="t" style="top:562px;font-size:11px;line-height:14px;color:#000;left:453px;">01010216</div>
<div class="t" style="top:562px;font-size:11px;line-height:14px;color:#000;left:404px;width:600px;text-align:right;">1,00000000</div>
<div class="t" style="top:582px;font-size:11px;line-height:14px;color:#000;left:-7.5px;width:600px;text-align:center;">15</div>
<div class="t" style="top:582px;font-size:11px;line-height:14px;color:#000;left:348px;">A0015</div>
<div class="t" style="top:582px;font-size:11px;line-height:14px;color:#000;left:453px;">01010217</div>
<div class="t" style="top:582px;font-size:11px;line-height:14px;color:#000;left:404px;width:600px;text-align:right;">1,00000000</div>
<div class="t" style="top:602px;font-size:11px;line-height:14px;color:#000;left:-7.5px;width:600px;text-align:center;">16</div>
<div class="t" style="top:602px;font-size:11px;line-height:14px;color:#000;left:348px;">A0016</div>
<div class="t" style="top:602px;font-size:11px;line-height:14px;color:#000;left:453px;">01010218</div>
<div class="t" style="top:602px;font-size:11px;line-height:14px;color:#000;left:404px;width:600px;text-align:right;">1,00000000</div>
<div class="t" style="top:622px;font-size:11px;line-height:14px;color:#000;left:-7.5px;width:600px;text-align:center;">17</div>
<div class="t" style="top:622px;font-size:11px;line-height:14px;color:#000;left:348px;">A0017</div>
<div class="t" style="top:622px;font-size:11px;line-height:14px;color:#000;left:453px;">01010219</div>
<div class="t" style="top:622px;font-size:11px;line-height:14px;color:#000;left:404px;width:600px;text-align:right;">1,00000000</div>
<div class="t" style="top:642px;font-size:11px;line-height:14px;color:#000;left:-7.5px;width:600px;text-align:center;">18</div>
<div class="t" style="top:642px;font-size:11px;line-height:14px;color:#000;left:348px;">A0018</div>
<div class="t" style="top:642px;font-size:11px;line-height:14px;color:#000;left:453px;">01010220</div>
<div class="t" style="top:642px;font-size:11px;line-height:14px;color:#000;left:404px;width:600px;text-align:right;">1,00000000</div>
<div class="t" style="top:662px;font-size:11px;line-height:14px;color:#000;left:-7.5px;width:600px;text-align:center;">19</div>
<div class="t" style="top:662px;font-size:11px;line-height:14px;color:#000;left:348px;">A0019</div>
<div class="t" style="top:662px;font-size:11px;line-height:14px;color:#000;left:453px;">01010221</div>
<div class="t" style="top:662px;font-size:11px;line-height:14px;color:#000;left:404px;width:600px;text-align:right;">1,00000000</div>
<div class="t" style="top:682px;font-size:11px;line-height:14px;color:#000;left:-7.5px;width:600px;text-align:center;">20</div>
<div class="t" style="top:682px;font-size:11px;line-height:14px;color:#000;left:348px;">A0020</div>
<div class="t" style="top:682px;font-size:11px;line-height:14px;color:#000;left:453px;">01010222</div>
<div class="t" style="top:682px;font-size:11px;line-height:14px;color:#000;left:404px;width:600px;text-align:right;">1,00000000</div>
<div class="t" style="top:702px;font-size:11px;line-height:14px;color:#000;left:-7.5px;width:600px;text-align:center;">21</div>
<div class="t" style="top:702px;font-size:11px;line-height:14px;color:#000;left:348px;">A0021</div>
<div class="t" style="top:702px;font-size:11px;line-height:14px;color:#000;left:453px;">01010223</div>
<div class="t" style="top:702px;font-size:11px;line-height:14px;color:#000;left:404px;width:600px;text-align:right;">1,00000000</div>
<div class="t" style="top:722px;font-size:11px;line-height:14px;color:#000;left:-7.5px;width:600px;text-align:center;">22</div>
<div class="t" style="top:722px;font-size:11px;line-height:14px;color:#000;left:348px;">A0022</div>
<div class="t" style="top:722px;font-size:11px;line-height:14px;color:#000;left:453px;">01010224</div>
<div class="t" style="top:722px;font-size:11px;line-height:14px;color:#000;left:404px;width:600px;text-align:right;">1,00000000</div>
<div style="left:243px;top:739px;width:764px;height:1px;background:#7ea3d2;"></div>
<div style="left:243px;top:740px;width:99px;height:16px;background:#d7d7d7;"></div>
<div style="left:343px;top:740px;width:209px;height:16px;background:#fff;"></div>
<div style="left:553px;top:740px;width:454px;height:16px;background:#d7d7d7;"></div>
<div style="left:342px;top:740px;width:1px;height:16px;background:#7ea3d2;"></div>
<div style="left:552px;top:740px;width:1px;height:16px;background:#7ea3d2;"></div>
<div style="left:243px;top:756px;width:782px;height:1px;background:#7ea3d2;"></div>
<div class="t" style="top:741px;font-size:11px;line-height:14px;color:#000;left:247px;">Số dòng = 25</div>
<div class="t" style="top:741px;font-size:11px;line-height:14px;color:#000;left:404px;width:600px;text-align:right;">25,00000000</div>
<svg style="position:absolute;left:241px;top:763px" width="32" height="31"><defs><linearGradient id="wg" x1="0" y1="0" x2="0" y2="1"><stop offset="0" stop-color="#fff6c8"/><stop offset="0.55" stop-color="#ffd93a"/><stop offset="1" stop-color="#fff0a0"/></linearGradient></defs><path d="M16 1.5L30.5 29.5H1.5Z" fill="url(#wg)" stroke="#d4a017" stroke-width="1.5" stroke-linejoin="round"/><path d="M14.2 10.5h3.6l-0.9 11h-1.8Z" fill="#333"/><circle cx="16" cy="25" r="1.8" fill="#333"/></svg>
<div class="t" style="top:774px;font-size:11px;line-height:14px;color:#000;left:284px;letter-spacing:-0.05px">Chênh lệch số lượng với tổng số lượng nhập chi tiết theo mã quy cách: 0,00000000</div>
<div style="left:866px;top:770px;width:75px;height:25px;background:#7fa4d2;"></div>
<div style="left:867px;top:771px;width:73px;height:23px;background:#adc7e6;"></div>
<div style="left:949px;top:770px;width:75px;height:25px;background:#7fa4d2;"></div>
<div style="left:950px;top:771px;width:73px;height:23px;background:#adc7e6;"></div>
<svg style="position:absolute;left:871px;top:774px" width="14" height="15"><defs><linearGradient id="fg" x1="0" y1="0" x2="1" y2="1"><stop offset="0" stop-color="#5a74ee"/><stop offset="1" stop-color="#7b92fa"/></linearGradient></defs><path d="M0 0H12L14 2V15H0Z" fill="#0b1ed4"/><path d="M1 1H12L13 2V14H1Z" fill="url(#fg)"/><rect x="1" y="1" width="2" height="4" fill="#a9b9ff"/><rect x="5" y="1" width="7" height="4" fill="#dcd7cb"/><rect x="9" y="2" width="2" height="2" fill="#2d4de8"/><rect x="3" y="8" width="8" height="6" fill="#fffbea"/><rect x="4" y="9" width="6" height="4" fill="#e6e6e6"/><rect x="1" y="13" width="1" height="1" fill="#e8ecff"/><rect x="12" y="13" width="1" height="1" fill="#e8ecff"/></svg>
<div class="t" style="top:776px;font-size:11px;line-height:14px;color:#000;left:903px;">Cất</div>
<svg style="position:absolute;left:953px;top:774px" width="15" height="15"><defs><linearGradient id="rg" x1="0" y1="0" x2="0" y2="1"><stop offset="0" stop-color="#f46a6a"/><stop offset="0.5" stop-color="#e42424"/><stop offset="1" stop-color="#d01818"/></linearGradient></defs><circle cx="7.5" cy="7.5" r="5.8" fill="none" stroke="url(#rg)" stroke-width="3.4"/><path d="M4.6 10.4L10.4 4.6" stroke="#e53535" stroke-width="2.6"/><path d="M4.9 10.1L10.1 4.9" stroke="#f59a9a" stroke-width="1" stroke-dasharray="1 1"/><path d="M3.5 4.2A5 5 0 0 1 11.5 4.2" fill="none" stroke="#ffc8c8" stroke-width="1" opacity="0.8"/></svg>
<div class="t" style="top:776px;font-size:11px;line-height:14px;color:#000;left:977px;">Hủy bỏ</div>
</body></html>
